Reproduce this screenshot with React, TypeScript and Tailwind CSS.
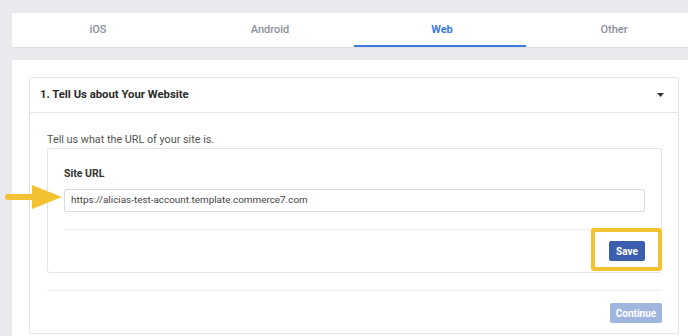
import React from "react";

export default function App() {
  const font = { fontFamily: "Roboto, 'Liberation Sans', Arial, sans-serif" };
  return (
    <div className="relative w-[688px] h-[336px] overflow-hidden bg-[#e9eaed]" style={font}>
      <div className="pl-[12px] pt-[13px]">
        {/* Tabs */}
        <div className="flex w-[688px] h-[35px] bg-white border-b border-[#dfe1e5]">
          {["iOS", "Android", "Web", "Other"].map((t) => (
            <div
              key={t}
              className={
                t === "Web"
                  ? "relative w-[172px] flex items-center justify-center text-[11px] font-bold text-[#3b7ae3]"
                  : "relative w-[172px] flex items-center justify-center text-[11px] font-medium text-[#8b9099]"
              }
            >
              {t}
              {t === "Web" && (
                <div className="absolute left-[-2px] right-[2px] bottom-0 h-[2px] bg-[#3b7ae3]" />
              )}
            </div>
          ))}
        </div>

        {/* Main panel */}
        <div className="mt-[12px] w-[700px] h-[300px] bg-white pl-[17px] pt-[17px]">
          <div className="w-[650px] border border-[#e3e4e7] rounded-[2px]">
            <div className="h-[35px] flex items-center justify-between border-b border-[#e6e7ea] pl-[10px] pr-[14px]">
              <span className="text-[11.3px] font-bold text-[#2b2b2b]">1. Tell Us about Your Website</span>
              <svg width="7" height="4" viewBox="0 0 7 4">
                <path d="M0 0 L7 0 L3.5 4 Z" fill="#333" />
              </svg>
            </div>
            <div className="pl-[17px] pr-[16px] pt-[19px] pb-[10px]">
              <div className="text-[10.8px] leading-[16px] text-[#555]">Tell us what the URL of your site is.</div>
              <div className="relative border border-[#e3e4e7] rounded-[3px] px-[16px] pt-[18px] pb-[11px]">
                <div className="text-[10.5px] leading-[14px] font-bold text-[#333]">Site URL</div>
                <div className="mt-[8px] h-[23px] border border-[#d9dbdf] rounded-[2px] flex items-center pl-[6px] text-[9.9px] text-[#444]">
                  https://alicias-test-account.template.commerce7.com
                </div>
                <div className="mt-[17px] border-t border-[#eceef0]" />
                <div className="mt-[11px] flex justify-end">
                  <div className="w-[36px] h-[20px] bg-[#3b5fae] rounded-[2px] flex items-center justify-center text-[10px] font-bold text-white">
                    Save
                  </div>
                </div>
                <div className="absolute left-[543px] top-[79px] w-[71px] h-[43px] border-[4px] border-[#f3c232] rounded-[3px]" />
              </div>
              <div className="mt-[17px] border-t border-[#eceef0]" />
              <div className="mt-[12px] flex justify-end">
                <div className="w-[52px] h-[20px] bg-[#a1b6de] rounded-[2px] flex items-center justify-center text-[10px] font-bold text-white">
                  Continue
                </div>
              </div>
            </div>
          </div>
        </div>
      </div>

      {/* Arrow annotation */}
      <svg className="absolute left-[3px] top-[184px]" width="62" height="26" viewBox="0 0 62 26">
        <line x1="5" y1="13" x2="32" y2="13" stroke="#f3c232" strokeWidth="6" strokeLinecap="round" />
        <path d="M29 1 L59 13 L29 25 Z" fill="#f3c232" />
      </svg>
    </div>
  );
}
